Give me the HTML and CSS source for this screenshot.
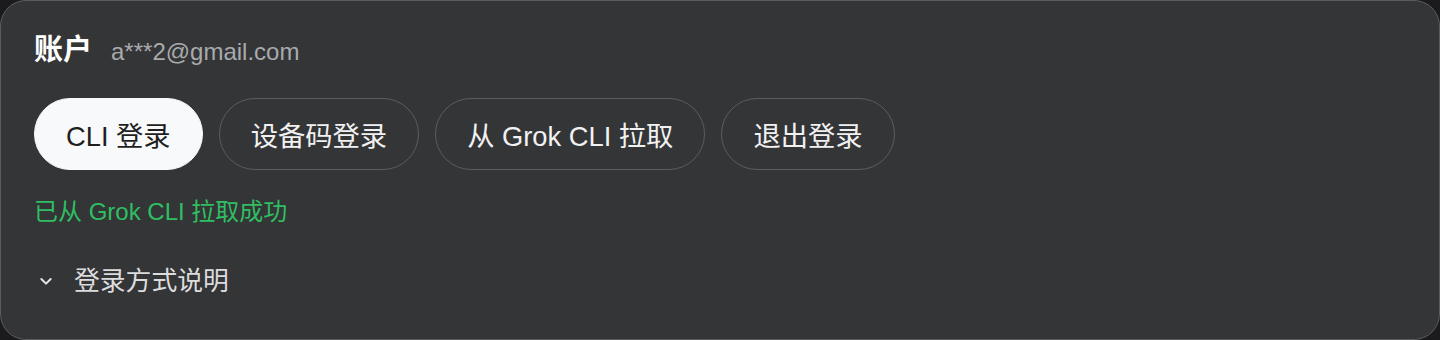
FILE: index.html
```html
<!DOCTYPE html>
<html lang="zh-CN">
<head>
    <meta charset="UTF-8">
    <meta name="viewport" content="width=device-width, initial-scale=1.0">
    <title>账户</title>
    <link rel="stylesheet" href="styles.css">
</head>
<body>
    <div class="card">
        <div class="header">
            <h2 class="title">账户</h2>
            <span class="email">a***2@gmail.com</span>
        </div>

        <div class="actions">
            <button class="btn btn-primary">CLI 登录</button>
            <button class="btn">设备码登录</button>
            <button class="btn">从 Grok CLI 拉取</button>
            <button class="btn">退出登录</button>
        </div>

        <div class="status">已从 Grok CLI 拉取成功</div>

        <div class="details">
            <svg class="chevron" width="16" height="16" viewBox="0 0 24 24" fill="none" stroke="currentColor" stroke-width="3" stroke-linecap="round" stroke-linejoin="round">
                <polyline points="5 9 12 16 19 9"/>
            </svg>
            <span>登录方式说明</span>
        </div>
    </div>
</body>
</html>
```

FILE: styles.css
```css
:root {
    --bg-page: #1b1b1d;
    --bg-card: #343537;
    --border: #5b5c5e;
    --color-text: #f1f1f2;
    --color-muted: #a9aaad;
    --color-success: #2fbf62;
}

* {
    margin: 0;
    padding: 0;
    box-sizing: border-box;
    font-family: "Liberation Sans", "Noto Sans CJK SC", sans-serif;
}

body {
    background-color: var(--bg-page);
    color: var(--color-text);
}

.card {
    height: 340px;
    background-color: var(--bg-card);
    border: 1px solid var(--border);
    border-radius: 26px;
    padding: 33px 33px 0;
}

.header {
    display: flex;
    align-items: center;
    gap: 19px;
    height: 32px;
    margin-bottom: 32px;
}

.title {
    font-size: 29px;
    font-weight: bold;
    line-height: 32px;
    color: #ffffff;
}

.email {
    font-size: 24px;
    color: var(--color-muted);
    line-height: 32px;
    padding-top: 3px;
}

.actions {
    display: flex;
    gap: 16px;
}

.btn {
    height: 72px;
    padding: 0 31px;
    border-radius: 36px;
    border: 1.5px solid var(--border);
    background: transparent;
    color: var(--color-text);
    font-size: 27.3px;
    cursor: pointer;
}

.btn-primary {
    background-color: #f8f9fa;
    border-color: #f8f9fa;
    color: #1f1f1f;
}

.status {
    margin-top: 25px;
    font-size: 24px;
    line-height: 34px;
    color: var(--color-success);
}

.details {
    display: flex;
    align-items: center;
    gap: 20px;
    margin-top: 35px;
    font-size: 25.8px;
    line-height: 34px;
    color: #dcdcde;
    padding-left: 4px;
}

.chevron {
    color: #e6e6e8;
}
```
